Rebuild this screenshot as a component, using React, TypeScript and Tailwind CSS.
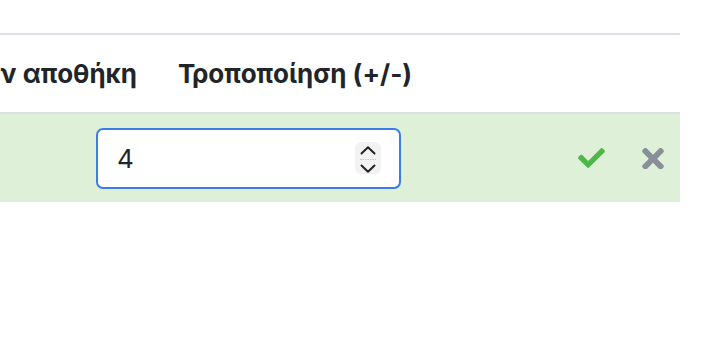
import React from "react";

function Spinner() {
  return (
    <div className="w-[26px] h-[32px] rounded-[6px] bg-[#f2f2f2] flex items-center justify-center">
      <svg width="26" height="32" viewBox="0 0 26 32" fill="none">
        <path d="M6.5 16.5 L13 10.3 L19.5 16.5" stroke="#222" strokeWidth="2" strokeLinecap="round" strokeLinejoin="round" transform="translate(0,-5)" />
        <path d="M6.5 15.5 L13 21.7 L19.5 15.5" stroke="#222" strokeWidth="2" strokeLinecap="round" strokeLinejoin="round" transform="translate(0,8)" />
        <path d="M5 17.5 H21" stroke="#c8c8c8" strokeWidth="1.2" strokeDasharray="1.5 1" />
      </svg>
    </div>
  );
}

export default function App() {
  return (
    <div className="w-[716px] h-[352px] bg-white overflow-hidden pt-[33px]" style={{ fontFamily: "Inter, 'Noto Sans', sans-serif" }}>
      <div className="w-[680px]">
        <div className="border-t-2 border-b-2 border-[#dee2e6] h-[81px] flex items-center text-[26px] font-bold text-[#212529]">
          <div className="w-[157px] shrink-0 flex justify-end pr-[20px] whitespace-nowrap">
            <span>Ποσότητα στην αποθήκη</span>
          </div>
          <div className="pl-[21px] whitespace-nowrap">Τροποποίηση (+/-)</div>
        </div>
        <div className="h-[88px] bg-[#dff0d8] flex items-center">
          <div className="ml-[96px] w-[305px] h-[61px] border-2 border-[#3d7ce8] rounded-[7px] bg-white flex items-center pl-[19px] pr-[18px] text-[26px] text-[#212529]">
            <span className="flex-1">4</span>
            <Spinner />
          </div>
          <svg className="ml-[177px]" width="27" height="20" viewBox="0 65 512 382" fill="#4db747">
            <path d="M173.898 439.404l-166.4-166.4c-9.997-9.997-9.997-26.206 0-36.204l36.203-36.204c9.997-9.998 26.207-9.998 36.204 0L192 312.69 432.095 72.596c9.997-9.997 26.207-9.997 36.204 0l36.203 36.204c9.997 9.997 9.997 26.206 0 36.204l-294.4 294.401c-9.998 9.997-26.207 9.997-36.204-.001z" />
          </svg>
          <svg className="ml-[37px]" width="22" height="21" viewBox="0 82 352 340" fill="#898e99">
            <path d="M242.72 256l100.07-100.07c12.28-12.28 12.28-32.19 0-44.48l-22.24-22.24c-12.280-12.28-32.19-12.28-44.48 0L176 189.28 75.930 89.21c-12.28-12.28-32.19-12.28-44.48 0L9.21 111.45c-12.28 12.28-12.28 32.19 0 44.48L109.28 256 9.21 356.07c-12.28 12.28-12.28 32.19 0 44.48l22.240 22.24c12.28 12.28 32.2 12.28 44.48 0L176 322.72l100.07 100.07c12.28 12.28 32.2 12.28 44.48 0l22.24-22.24c12.28-12.28 12.28-32.19 0-44.48L242.72 256z" />
          </svg>
        </div>
      </div>
    </div>
  );
}
